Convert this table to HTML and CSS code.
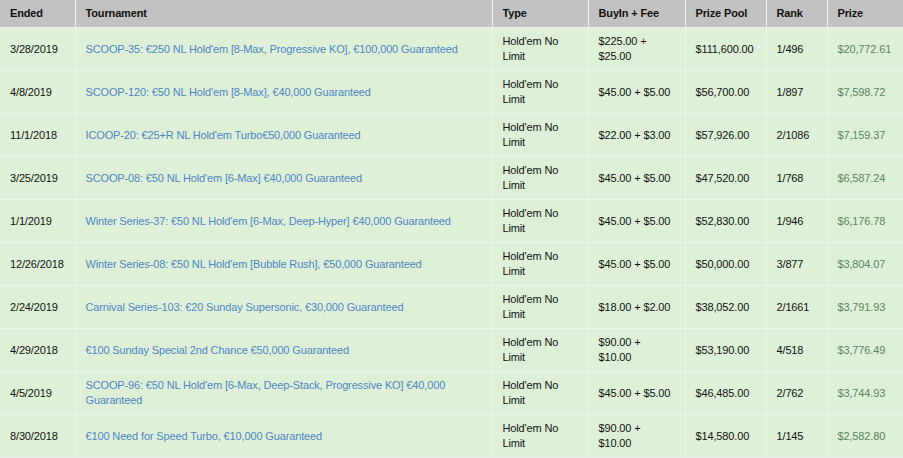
FILE: index.html
```html
<!DOCTYPE html>
<html>
<head>
<meta charset="utf-8">
<link rel="stylesheet" href="styles.css">
</head>
<body>
<table class="results">
  <colgroup>
    <col class="c-ended"><col class="c-tour"><col class="c-type"><col class="c-buyin"><col class="c-pool"><col class="c-rank"><col class="c-prize">
  </colgroup>
  <thead>
    <tr><th>Ended</th><th>Tournament</th><th>Type</th><th>BuyIn + Fee</th><th>Prize Pool</th><th>Rank</th><th>Prize</th></tr>
  </thead>
  <tbody>
    <tr><td>3/28/2019</td><td><a href="#">SCOOP-35: €250 NL Hold'em [8-Max, Progressive KO], €100,000 Guaranteed</a></td><td>Hold'em No Limit</td><td>$225.00 + $25.00</td><td>$111,600.00</td><td>1/496</td><td class="prize">$20,772.61</td></tr>
    <tr><td>4/8/2019</td><td><a href="#">SCOOP-120: €50 NL Hold'em [8-Max], €40,000 Guaranteed</a></td><td>Hold'em No Limit</td><td>$45.00 + $5.00</td><td>$56,700.00</td><td>1/897</td><td class="prize">$7,598.72</td></tr>
    <tr><td>11/1/2018</td><td><a href="#">ICOOP-20: €25+R NL Hold'em Turbo€50,000 Guaranteed</a></td><td>Hold'em No Limit</td><td>$22.00 + $3.00</td><td>$57,926.00</td><td>2/1086</td><td class="prize">$7,159.37</td></tr>
    <tr><td>3/25/2019</td><td><a href="#">SCOOP-08: €50 NL Hold'em [6-Max] €40,000 Guaranteed</a></td><td>Hold'em No Limit</td><td>$45.00 + $5.00</td><td>$47,520.00</td><td>1/768</td><td class="prize">$6,587.24</td></tr>
    <tr><td>1/1/2019</td><td><a href="#">Winter Series-37: €50 NL Hold'em [6-Max, Deep-Hyper] €40,000 Guaranteed</a></td><td>Hold'em No Limit</td><td>$45.00 + $5.00</td><td>$52,830.00</td><td>1/946</td><td class="prize">$6,176.78</td></tr>
    <tr><td>12/26/2018</td><td><a href="#">Winter Series-08: €50 NL Hold'em [Bubble Rush], €50,000 Guaranteed</a></td><td>Hold'em No Limit</td><td>$45.00 + $5.00</td><td>$50,000.00</td><td>3/877</td><td class="prize">$3,804.07</td></tr>
    <tr><td>2/24/2019</td><td><a href="#">Carnival Series-103: €20 Sunday Supersonic, €30,000 Guaranteed</a></td><td>Hold'em No Limit</td><td>$18.00 + $2.00</td><td>$38,052.00</td><td>2/1661</td><td class="prize">$3,791.93</td></tr>
    <tr><td>4/29/2018</td><td><a href="#">€100 Sunday Special 2nd Chance €50,000 Guaranteed</a></td><td>Hold'em No Limit</td><td>$90.00 + $10.00</td><td>$53,190.00</td><td>4/518</td><td class="prize">$3,776.49</td></tr>
    <tr><td>4/5/2019</td><td><a href="#">SCOOP-96: €50 NL Hold'em [6-Max, Deep-Stack, Progressive KO] €40,000 Guaranteed</a></td><td>Hold'em No Limit</td><td>$45.00 + $5.00</td><td>$46,485.00</td><td>2/762</td><td class="prize">$3,744.93</td></tr>
    <tr><td>8/30/2018</td><td><a href="#">€100 Need for Speed Turbo, €10,000 Guaranteed</a></td><td>Hold'em No Limit</td><td>$90.00 + $10.00</td><td>$14,580.00</td><td>1/145</td><td class="prize">$2,582.80</td></tr>
  </tbody>
</table>
</body>
</html>
```
FILE: styles.css
```css
html, body {
  margin: 0;
  padding: 0;
  background: #ffffff;
}
body {
  font-family: "Liberation Sans", Arial, Helvetica, sans-serif;
  font-size: 11px;
  line-height: 15px;
  letter-spacing: -0.14px;
  color: #111;
}
.results {
  width: 903px;
  border-collapse: collapse;
  table-layout: fixed;
}
.c-ended { width: 75px; }
.c-tour { width: 417px; }
.c-type { width: 96px; }
.c-buyin { width: 97px; }
.c-pool { width: 81px; }
.c-rank { width: 61px; }
.c-prize { width: 76px; }
.results th,
.results td {
  padding: 6px 10px 6px 10px;
  border: 1px solid #eef3ec;
  text-align: left;
  vertical-align: middle;
}
.results tr > :first-child { border-left: none; }
.results thead tr > * { border-top: none; }
.results th {
  background: #c2c2c2;
  font-weight: bold;
  color: #111;
  height: 14px;
  border-color: #f2f2f2;
}
.results td {
  background: #dff0d8;
  height: 30px;
}
.results a {
  color: #4e86c2;
  text-decoration: none;
}
.results .prize {
  color: #5a8560;
}
```
